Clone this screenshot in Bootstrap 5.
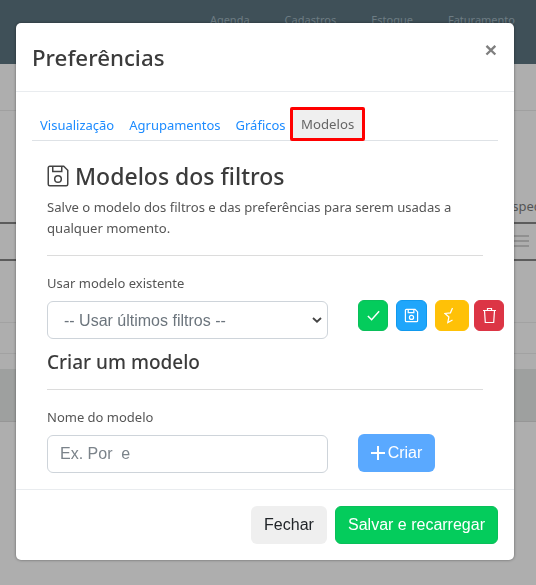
<!DOCTYPE html>
<html lang="pt-BR">
<head>
<meta charset="utf-8">
<title>Preferências</title>
<link href="https://cdn.jsdelivr.net/npm/bootstrap@5.3.0/dist/css/bootstrap.min.css" rel="stylesheet">
<style>
html,body{height:585px;overflow:hidden}
body{background:#aeaeae;font-family:"Noto Sans",sans-serif;color:#4a4a4a}
.backnav{height:64px;background:#3f5058;gap:35px;padding:12px 21px 0 0;font-size:11px;color:#6d7c83}
.backspace1{height:47px;border-bottom:1px solid #a0a0a0}
.backspace2{height:113px;border-bottom:2px solid #5c5c5c}
.backspace3{height:37px;border-bottom:2px solid #5c5c5c;position:relative}
.backtext{position:absolute;right:-4px;top:-27px;font-size:13px;color:#555}
.backburger{position:absolute;right:7px;top:11px;width:15px;height:12px;border-top:2px solid #909090;border-bottom:2px solid #909090}
.backburger::after{content:"";display:block;height:2px;margin-top:3px;background:#909090}
.backspace4{height:62px;border-bottom:1px solid #a2a2a2}
.backspace5{height:31px;border-bottom:1px solid #a2a2a2}
.backspace6{height:15px}
.backband{height:53px;background:#9ea09f;border-bottom:1px solid #969696}
.prefmodal{position:fixed;left:16px;top:23px;width:498px;height:537px;background:#fff;border-radius:5px;box-shadow:0 0 3px rgba(0,0,0,.45);display:flex;flex-direction:column;overflow:hidden}
.prefhead{height:69px;padding:0 16px;border-bottom:1px solid #e9ecef;flex:none}
.preftitle{font-size:22.3px;font-weight:500;color:#3b3b3b;margin:0;line-height:1.2;padding-top:3px}
.prefclose{font-family:"Liberation Sans",sans-serif;font-size:21px;font-weight:700;color:#7f7f7f;line-height:1;background:none;border:0;padding:0;margin-top:-15px;margin-right:1px}
.prefbody{flex:1 1 auto;overflow:hidden;padding:15px 16px 0}
.preftabs{border-bottom:1px solid #dee2e6;height:34px;font-size:13px;margin-bottom:0;align-items:flex-end}
.preftab{display:block;color:#1c8bff;padding:0 7.5px 6px;line-height:18px;text-decoration:none}
.preftab.first{padding-left:8px}
.preftab.current{color:#666;background:#efefef;border:3px solid #f00;border-radius:2px;padding:4px 8px 3px;margin:0 0 -1px -3px;height:34px;line-height:20px;font-size:13.2px}
.prefpane{padding:20px 15px 0}
.panetitle{font-size:23px;font-weight:500;color:#3b3b3b;line-height:30px;margin:0 0 6px;display:flex;align-items:center;gap:5px}
.paneicon{margin-left:-1px}
.panetext{font-size:13.1px;line-height:21px;color:#555;margin:0}
.panerule{border:0;border-top:1px solid #dcdcdc;opacity:1;margin:16px 0 17px}
.panelabel{font-size:13px;line-height:20px;color:#555;margin:0 0 8px;display:block}
.fieldrow{display:flex;align-items:flex-start}
.fieldbox{width:281px;flex:none}
.prefselect,.prefinput{height:38px;border-color:#ced4da;border-radius:6px;font-family:"Liberation Sans",sans-serif;font-size:16px;color:#6c757d;padding-left:16px}
.prefselect{padding-top:7px;padding-bottom:5px;background-image:url("data:image/svg+xml,%3Csvg xmlns='http://www.w3.org/2000/svg' viewBox='0 0 10 6'%3E%3Cpath d='M1 1l4 3.6L9 1' fill='none' stroke='%23444' stroke-width='1.9'/%3E%3C/svg%3E");background-size:10px 6px;background-position:right 5px center}
.prefinput{padding-left:12px}
.prefinput::placeholder{color:#7b838a;opacity:1}
.iconbtns{display:flex;margin-left:30px;margin-top:-1px}
.squarebtn{width:30px;height:31px;border-radius:6px;border:1px solid transparent;padding:0;display:flex;align-items:center;justify-content:center}
.sqgreen{background:#04cc5c;border-color:#0abf5a}
.sqblue{width:31px;margin-left:8px;background:#1fa6fb;border-color:#1199ee}
.sqyellow{width:34px;margin-left:8px;background:#ffc107;border-color:#ffc107}
.sqred{margin-left:5px;background:#dc3545;border-color:#dc3545}
.subtitle{font-size:19px;font-weight:500;color:#3b3b3b;line-height:22px;margin:12px 0 0}
.createbtn{width:77px;height:38px;margin-left:30px;margin-top:-1px;background:#5aa9ff;border:0;border-radius:6px;color:#fff;font-family:"Liberation Sans",sans-serif;font-size:16px;display:flex;align-items:center;justify-content:center;gap:3px;padding:0}
.preffoot{height:71px;flex:none;border-top:1px solid #e9ecef;padding:16px 16px 0;display:flex;justify-content:flex-end;align-items:flex-start;gap:8px}
.footbtn{height:38px;border-radius:6px;font-family:"Liberation Sans",sans-serif;font-size:16px;padding:0 12px;border:1px solid transparent}
.footgrey{width:76px;background:#efefef;color:#212529}
.footgreen{width:163px;background:#04cc5c;border-color:#0abf5a;color:#fff;white-space:nowrap}
</style>
</head>
<body>
<div class="backnav d-flex justify-content-end">
  <span>Agenda</span><span>Cadastros</span><span>Estoque</span><span>Faturamento</span>
</div>
<div class="backspace1"></div>
<div class="backspace2"></div>
<div class="backspace3"><span class="backtext">spec</span><span class="backburger"></span></div>
<div class="backspace4"></div>
<div class="backspace5"></div>
<div class="backspace6"></div>
<div class="backband"></div>

<div class="prefmodal" role="dialog">
  <div class="prefhead d-flex align-items-center justify-content-between">
    <h5 class="preftitle">Preferências</h5>
    <button class="prefclose" type="button" aria-label="Fechar">×</button>
  </div>
  <div class="prefbody">
    <div class="preftabs d-flex">
      <a class="preftab first" href="#">Visualização</a>
      <a class="preftab" href="#">Agrupamentos</a>
      <a class="preftab" href="#">Gráficos</a>
      <a class="preftab current" href="#">Modelos</a>
    </div>
    <div class="prefpane">
      <h4 class="panetitle">
        <svg class="paneicon" width="24" height="24" viewBox="0 0 16 16" fill="none" stroke="#444" stroke-width="1"><path d="M1.5 2.5a1 1 0 0 1 1-1h9.3l2.7 2.7v9.3a1 1 0 0 1-1 1h-11a1 1 0 0 1-1-1z"/><path d="M4.5 1.5v3.5h6v-3.5"/><circle cx="8" cy="10" r="2.2"/></svg>
        Modelos dos filtros
      </h4>
      <p class="panetext">Salve o modelo dos filtros e das preferências para serem usadas a qualquer momento.</p>
      <hr class="panerule">
      <label class="panelabel">Usar modelo existente</label>
      <div class="fieldrow">
        <div class="fieldbox"><select class="form-select prefselect"><option>-- Usar últimos filtros --</option></select></div>
        <div class="iconbtns">
          <button class="squarebtn sqgreen" type="button" aria-label="Aplicar"><svg width="15" height="15" viewBox="0 0 16 16" fill="none" stroke="#fff" stroke-width="1.6"><path d="M2 8.5l4 4 8-9"/></svg></button>
          <button class="squarebtn sqblue" type="button" aria-label="Salvar"><svg width="15" height="15" viewBox="0 0 16 16" fill="none" stroke="#fff" stroke-width="1.3"><path d="M1.5 2.5a1 1 0 0 1 1-1h9.3l2.7 2.7v9.3a1 1 0 0 1-1 1h-11a1 1 0 0 1-1-1z"/><path d="M4.5 1.5v3.5h6v-3.5"/><circle cx="8" cy="10" r="2.2"/></svg></button>
          <button class="squarebtn sqyellow" type="button" aria-label="Favorito"><svg width="17" height="17" viewBox="0 0 18 18" fill="none" stroke="#fff" stroke-width="1.3"><path d="M9 1L6.8 6.2 1 6.8l4.2 3.7L4 16.5l5-2.7"/></svg></button>
          <button class="squarebtn sqred" type="button" aria-label="Excluir"><svg width="15" height="17" viewBox="0 0 15 17" fill="none" stroke="#fff" stroke-width="1.2"><path d="M1 3.5h13M5.5 3.5V1.5h4v2M2.5 3.5l.8 12h8.4l.8-12"/></svg></button>
        </div>
      </div>
      <h5 class="subtitle">Criar um modelo</h5>
      <hr class="panerule">
      <label class="panelabel">Nome do modelo</label>
      <div class="fieldrow">
        <div class="fieldbox"><input class="form-control prefinput" type="text" placeholder="Ex. Por  e"></div>
        <button class="createbtn" type="button"><svg width="14" height="14" viewBox="0 0 14 14" stroke="#fff" stroke-width="2"><path d="M7 0v14M0 7h14"/></svg>Criar</button>
      </div>
    </div>
  </div>
  <div class="preffoot">
    <button class="footbtn footgrey" type="button">Fechar</button>
    <button class="footbtn footgreen" type="button">Salvar e recarregar</button>
  </div>
</div>
<script src="https://cdn.jsdelivr.net/npm/bootstrap@5.3.0/dist/js/bootstrap.bundle.min.js"></script>
</body>
</html>
